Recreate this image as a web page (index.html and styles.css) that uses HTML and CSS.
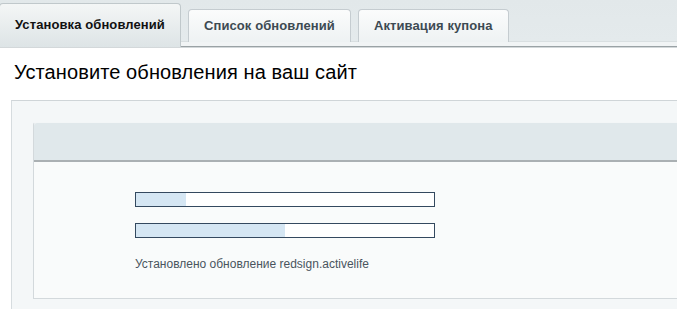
FILE: index.html
```html
<!DOCTYPE html>
<html lang="ru">

<head>
    <meta charset="UTF-8">
    <meta name="viewport" content="width=device-width, initial-scale=1.0">
    <title>Установка обновлений</title>
    <link rel="stylesheet" href="styles.css">
</head>

<body>
    <!-- Вкладки -->
    <div class="tabs-bar">
        <div class="tab tab-active">Установка обновлений</div>
        <div class="tab">Список обновлений</div>
        <div class="tab">Активация купона</div>
    </div>

    <div class="page">
        <h1 class="page-title">Установите обновления на ваш сайт</h1>

        <div class="outer-panel">
            <div class="inner-box">
                <div class="inner-head"></div>
                <div class="inner-body">
                    <div class="progress"><div class="progress-fill" style="width: 50px"></div></div>
                    <div class="progress"><div class="progress-fill" style="width: 149px"></div></div>
                    <p class="status">Установлено обновление redsign.activelife</p>
                </div>
            </div>
        </div>
    </div>
</body>

</html>
```

FILE: styles.css
```css
body {
    font-family: 'Liberation Sans', Arial, sans-serif;
    margin: 0;
    padding: 0;
    background: #fff;
    overflow: hidden;
}

/* Вкладки */
.tabs-bar {
    display: flex;
    align-items: flex-start;
    gap: 7px;
    height: 47px;
    padding-top: 3px;
    box-sizing: border-box;
    background: linear-gradient(to bottom, #e2e8ea 0, #e4eaec 41px, #d9dfe1 41px, #d9dfe1 42px, #f1f4f5 42px);
    border-bottom: 1px solid #9aa2a5;
    box-shadow: 0 1px 0 #d3d8da;
}

.tab {
    height: 33px;
    margin-top: 6px;
    padding: 0 15px;
    line-height: 32px;
    font-size: 13px;
    font-weight: bold;
    letter-spacing: 0.1px;
    color: #3d4a53;
    background: linear-gradient(to bottom, #fbfcfc, #eef2f3);
    border: 1px solid #c5ccd0;
    border-bottom: none;
    border-radius: 4px 4px 0 0;
    box-sizing: border-box;
}

.tab-active {
    height: 44px;
    margin-top: 0;
    margin-left: -1px;
    line-height: 42px;
    color: #111;
    background: linear-gradient(to bottom, #f4f6f6, #dde4e6);
    border-color: #c0c8cb;
}

/* Contenido */
.page {
    padding: 0 0 0 11px;
}

.page-title {
    margin: 0;
    padding: 14px 0 0 3px;
    height: 53px;
    box-sizing: border-box;
    font-size: 20px;
    font-weight: normal;
    letter-spacing: 0.1px;
    color: #000;
}

.outer-panel {
    width: 720px;
    padding: 21px 0 10px 21px;
    background: #f4f7f8;
    border-top: 1px solid #cfd5d8;
    border-left: 1px solid #d6dcdf;
}

.inner-box {
    border-left: 1px solid #d3d9dc;
    border-top: 1px solid #f3f6f7;
    border-bottom: 1px solid #d3d9dc;
    border-radius: 3px 0 0 0;
    background: #f9fbfb;
}

.inner-head {
    height: 37px;
    background: #e0e8eb;
    border-bottom: 2px solid #aab0b3;
    border-radius: 3px 0 0 0;
}

.inner-body {
    padding: 30px 0 27px 101px;
}

.progress {
    width: 300px;
    height: 15px;
    margin-bottom: 16px;
    border: 1px solid #34495f;
    box-sizing: border-box;
    background: #fff;
}

.progress-fill {
    height: 100%;
    background: #d5e6f3;
}

.status {
    margin: 19px 0 0;
    font-size: 12px;
    color: #4a555e;
}
```
